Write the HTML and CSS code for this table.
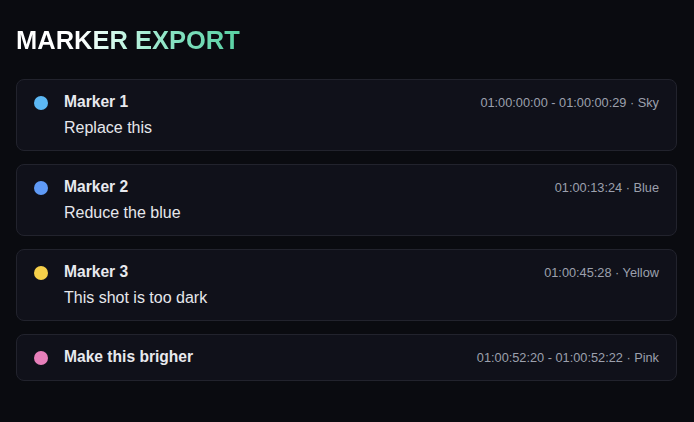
FILE: index.html
```html
<!DOCTYPE html>
<html lang="en">
<head>
<meta charset="utf-8">
<title>Marker Export</title>
<link rel="stylesheet" href="styles.css">
</head>
<body>
<main class="page">
  <h1 class="title">MARKER EXPORT</h1>
  <ul class="markers">
    <li class="card">
      <span class="dot dot-sky"></span>
      <div class="body">
        <div class="head"><span class="name">Marker 1</span><span class="meta">01:00:00:00 - 01:00:00:29 · Sky</span></div>
        <div class="note">Replace this</div>
      </div>
    </li>
    <li class="card">
      <span class="dot dot-blue"></span>
      <div class="body">
        <div class="head"><span class="name">Marker 2</span><span class="meta">01:00:13:24 · Blue</span></div>
        <div class="note">Reduce the blue</div>
      </div>
    </li>
    <li class="card">
      <span class="dot dot-yellow"></span>
      <div class="body">
        <div class="head"><span class="name">Marker 3</span><span class="meta">01:00:45:28 · Yellow</span></div>
        <div class="note">This shot is too dark</div>
      </div>
    </li>
    <li class="card">
      <span class="dot dot-pink"></span>
      <div class="body">
        <div class="head"><span class="name">Make this brigher</span><span class="meta">01:00:52:20 - 01:00:52:22 · Pink</span></div>
      </div>
    </li>
  </ul>
</main>
</body>
</html>
```
FILE: styles.css
```css
html, body {
  margin: 0;
  padding: 0;
  background: #0a0b10;
}
body {
  font-family: "Liberation Sans", Arial, sans-serif;
  color: #e6e7ec;
}
.page {
  padding: 16px 17px 16px 16px;
}
.title {
  margin: 9px 0 24px;
  font-size: 25.5px;
  line-height: 30px;
  font-weight: 700;
  display: inline-block;
  background: linear-gradient(90deg, #ffffff 0%, #ffffff 28%, #bdf4e0 50%, #82e0bf 72%, #58d1a3 100%);
  -webkit-background-clip: text;
  background-clip: text;
  color: transparent;
}
.markers {
  list-style: none;
  margin: 0;
  padding: 0;
  display: flex;
  flex-direction: column;
  gap: 13px;
}
.card {
  display: flex;
  align-items: flex-start;
  gap: 16px;
  padding: 12px 17px 12px 17px;
  background: #10111a;
  border: 1px solid #22232d;
  border-radius: 8px;
}
.dot {
  flex: none;
  width: 14px;
  height: 14px;
  margin-top: 4px;
  border-radius: 50%;
}
.dot-sky { background: #5cb8f4; }
.dot-blue { background: #5f9af6; }
.dot-yellow { background: #f6d04a; }
.dot-pink { background: #e77fba; }
.body {
  flex: 1;
  display: flex;
  flex-direction: column;
  gap: 5px;
}
.head {
  display: flex;
  justify-content: space-between;
  align-items: baseline;
}
.name {
  font-size: 15.6px;
  line-height: 20px;
  font-weight: 700;
  color: #e8e9ee;
}
.meta {
  font-size: 12.75px;
  line-height: 20px;
  color: #9ca0ad;
}
.note {
  font-size: 16px;
  line-height: 20px;
  color: #e6e7ec;
}
```
